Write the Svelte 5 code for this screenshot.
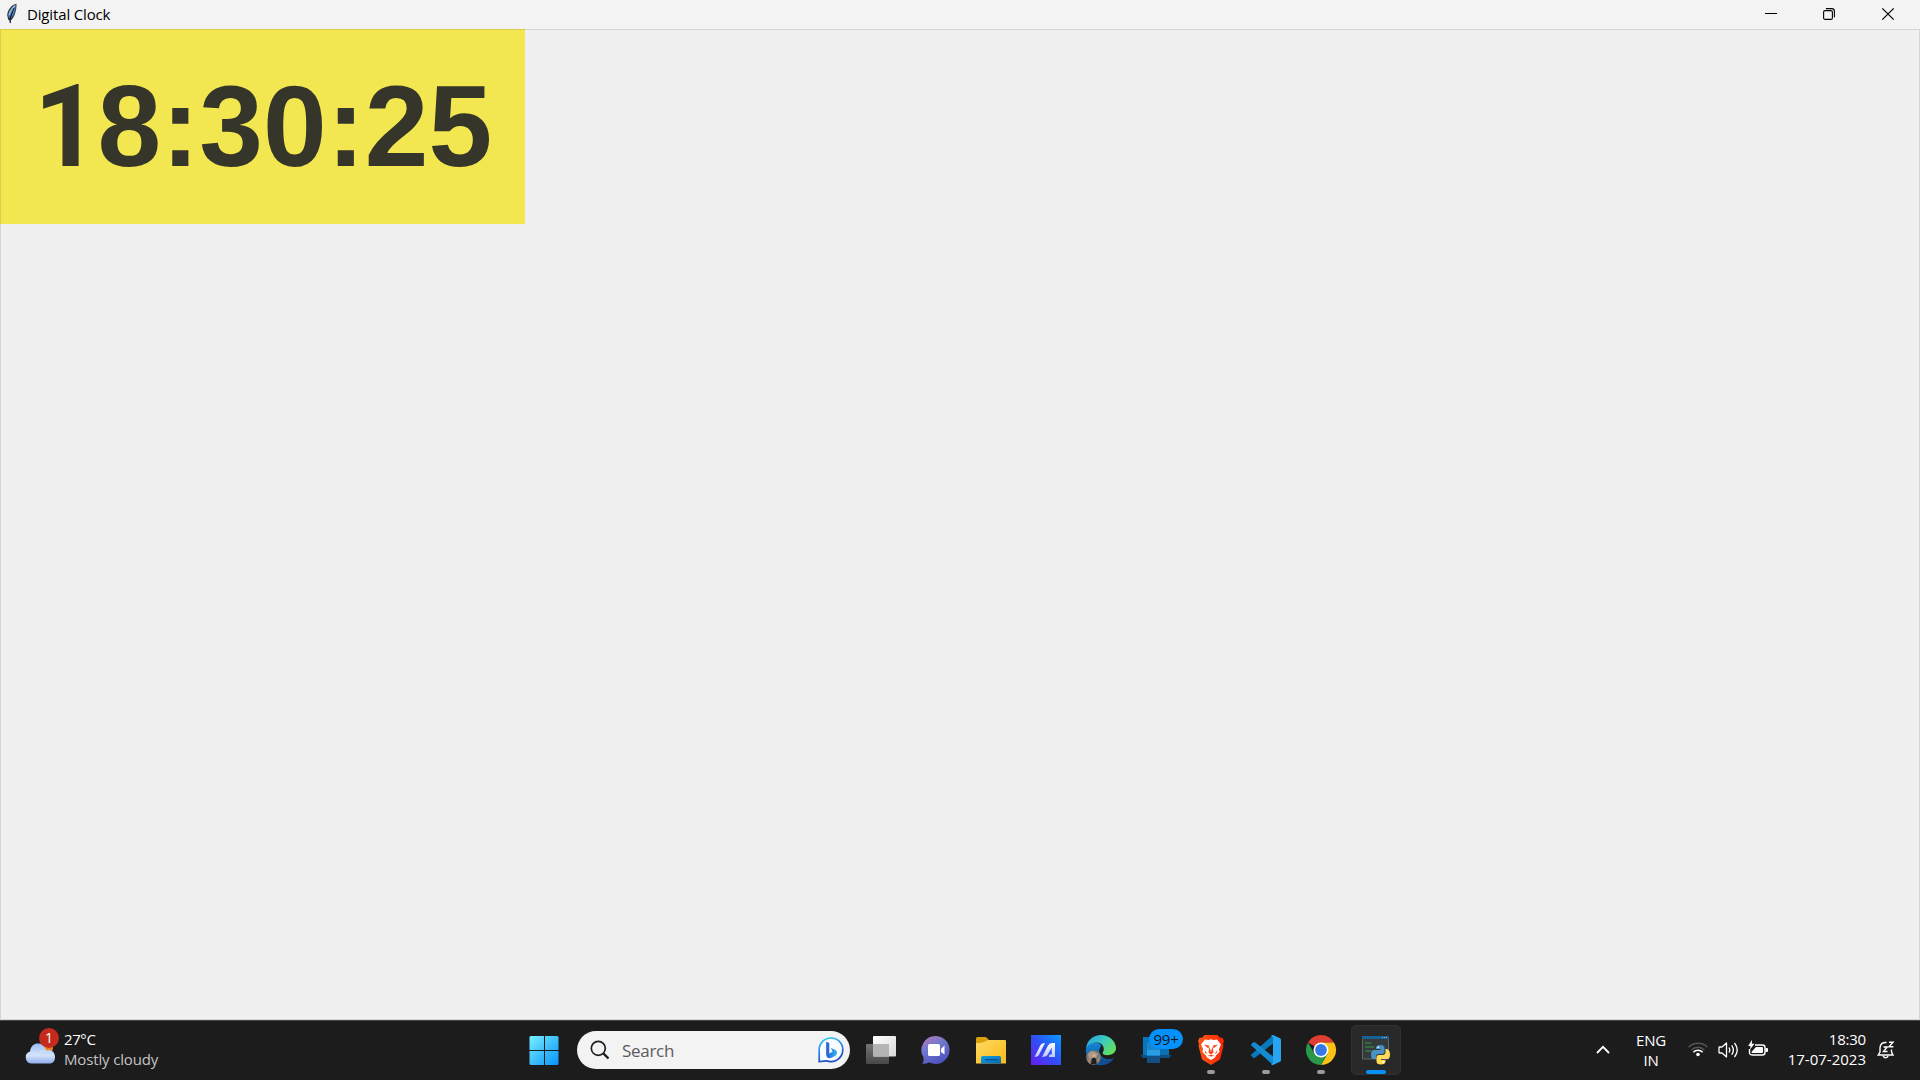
<script>
  const time = '18:30:25';
</script>

<div class="desktop">
  <header class="titlebar">
    <svg class="feather" width="12" height="22" viewBox="0 0 12 22">
      <path d="M10.5 .8C6 1.500 1.200 7 1.200 12.500L2.300 17 3.800 17.500 4 21 4.700 17.500C8.500 15 10.800 7 10.500.8Z" fill="#343b44" />
      <path d="M9.500 2C6 4 2.800 8 2.300 13L3.500 15 7 7.500 5 15.500C8 12 9.800 7 9.500 2Z" fill="#4a86cf" />
      <path d="M9 2.500C6.500 5 4 8 3 12" stroke="#a4bdd8" stroke-width="1.200" fill="none" />
      <path d="M8 5 4.200 15V20" stroke="#0d1420" stroke-width="1" fill="none" />
    </svg>
    <span class="title">Digital Clock</span>
    <div class="controls">
      <svg width="12" height="12" viewBox="0 0 12 12"><path d="M0 5.500H12" stroke="#000" /></svg>
      <svg width="12" height="12" viewBox="0 0 12 12" fill="none" stroke="#000" stroke-width="1.100">
        <rect x=".6" y="2.600" width="8.800" height="8.800" rx="1.500" />
        <path d="M2.900.6H8.800Q11.400.6 11.400 3.200V9.300" />
      </svg>
      <svg width="12" height="12" viewBox="0 0 12 12"><path d="M.3.3 11.700 11.700M11.700.3.3 11.700" stroke="#000" stroke-width="1.200" /></svg>
    </div>
  </header>

  <main>
    <div class="clock">{#each time as digit}<span class:one={digit === '1'}>{digit}</span>{/each}</div>
  </main>

  <footer class="taskbar">
    <div class="weather">
      <div class="weather-icon">
        <svg width="32" height="32" viewBox="0 0 32 32">
          <defs>
            <linearGradient id="cloud" x1="0" y1="0" x2="0" y2="1"><stop offset="0" stop-color="#9cbdf3" /><stop offset=".6" stop-color="#d3e2fa" /><stop offset="1" stop-color="#8eadea" /></linearGradient>
          </defs>
          <circle cx="23" cy="14" r="6" fill="#ef7d1a" />
          <path d="M7 29.500A6.200 6.200 0 0 1 6 17.500C7 11 11 9 15 9.500C19 10 21.500 13 22 16.500C27 14.500 31 18 31 23C31 27 29 29.500 25.500 29.500Z" fill="url(#cloud)" />
          <path d="M2 22C6 16 11 18 13.500 22C16 17.500 20 16 23 17" fill="none" stroke="#dce8fc" stroke-width="1" opacity=".7" />
        </svg>
        <span class="alert">1</span>
      </div>
      <div class="weather-text">
        <span class="temp">27°C</span>
        <span class="condition">Mostly cloudy</span>
      </div>
    </div>

    <div class="apps">
      <div class="app">
        <svg width="30" height="30" viewBox="0 0 30 30">
          <defs><linearGradient id="win" gradientUnits="userSpaceOnUse" x1="0" y1="0" x2="30" y2="30"><stop stop-color="#7bf3ff" /><stop offset=".5" stop-color="#3fc0fb" /><stop offset="1" stop-color="#0594fb" /></linearGradient></defs>
          <path d="M1.500 1H15V15H.5V2ZM16 1H28.500L29.500 2V15H16ZM.5 16H15V30H1.500L.5 29ZM16 16H29.500V29L28.500 30H16Z" fill="url(#win)" />
        </svg>
      </div>

      <div class="search">
        <svg width="20" height="20" viewBox="0 0 20 20" fill="none" stroke="#202020"><circle cx="8.300" cy="8.300" r="7" stroke-width="1.700" /><path d="M13.300 13.300 18.500 18.500" stroke-width="2.400" /></svg>
        <span>Search</span>
        <svg class="bing" width="26" height="26" viewBox="0 0 26 26">
          <defs>
            <linearGradient id="bingRing" x1="0" y1="0" x2=".3" y2="1"><stop stop-color="#23d3ee" /><stop offset=".5" stop-color="#2e8bec" /><stop offset="1" stop-color="#1b4bc0" /></linearGradient>
            <linearGradient id="bingB" x1="0" y1="0" x2="1" y2="0"><stop stop-color="#2459d7" /><stop offset="1" stop-color="#30bcec" /></linearGradient>
          </defs>
          <path d="M1.200 24.600V12.800A11.800 11.800 0 1 1 13 24.600Q10.500 24.600 8.500 23.800Z" fill="#fafcff" stroke="url(#bingRing)" stroke-width="1.700" />
          <path d="M8.200 4.700 11.300 6V16.500L14.500 14.800 13 11 17.500 13Q19.800 14.500 18.800 17.300Q17 20 11.700 21.300Q8.300 21 8.200 17.500Z" fill="url(#bingB)" />
        </svg>
      </div>

      <div class="app">
        <svg width="30" height="30" viewBox="0 0 30 30">
          <defs><linearGradient id="tv" x1="0" y1="0" x2="1" y2="1"><stop stop-color="#fff" /><stop offset="1" stop-color="#d8d8d8" /></linearGradient><linearGradient id="tb" x1="0" y1="0" x2="0" y2="1"><stop stop-color="#737373" /><stop offset="1" stop-color="#484848" /></linearGradient></defs>
          <rect x="0" y="9" width="23" height="20" rx="1" fill="url(#tb)" />
          <rect x="7" y="1" width="23" height="20.500" rx="1" fill="url(#tv)" />
          <path d="M7 9H23V21.500H8Q7 21.500 7 20.500Z" fill="#b4b4b4" />
        </svg>
      </div>

      <div class="app">
        <svg width="30" height="30" viewBox="0 0 30 30">
          <defs><linearGradient id="chat" x1="0" y1="0" x2=".5" y2="1"><stop stop-color="#bd77b6" /><stop offset=".45" stop-color="#7378ce" /><stop offset="1" stop-color="#5054be" /></linearGradient></defs>
          <path d="M15 1A14 14 0 1 1 8.500 27.600Q5 29 1.200 28.800Q3.300 26 2.500 22.300A14 14 0 0 1 15 1Z" fill="url(#chat)" />
          <rect x="7" y="9" width="12" height="12" rx="1.500" fill="#fff" /><path d="M20 14 23.500 10.500V19.500L20 17Z" fill="#fff" />
        </svg>
      </div>

      <div class="app">
        <svg width="30" height="30" viewBox="0 0 30 30">
          <defs><linearGradient id="fold" x1="0" y1="0" x2="1" y2="1"><stop stop-color="#ffda63" /><stop offset="1" stop-color="#fab916" /></linearGradient><linearGradient id="pocket" x1="0" y1="0" x2="1" y2="1"><stop stop-color="#13a0df" /><stop offset="1" stop-color="#0766b4" /></linearGradient></defs>
          <path d="M0 3.500Q0 2 1.500 2H9Q10 2 11 3L13 5V10H0Z" fill="#dda00d" />
          <path d="M0 8Q6 8 9 6.500L12 5H29Q30 5 30 6V28.500H0Z" fill="url(#fold)" />
          <path d="M5 28.500V22.500Q5 21 6.500 21H23.500Q25 21 25 22.500V28.500Z" fill="url(#pocket)" /><path d="M9 24.700H21.500" stroke="#064c87" stroke-width="1.200" />
        </svg>
      </div>

      <div class="app">
        <svg width="30" height="30" viewBox="0 0 30 30">
          <defs><linearGradient id="ma" x1="1" y1="0" x2="0" y2="1"><stop stop-color="#079cff" /><stop offset=".5" stop-color="#314ff6" /><stop offset="1" stop-color="#671cef" /></linearGradient><linearGradient id="maw" x1="0" y1="0" x2="0" y2="1"><stop stop-color="#fff" /><stop offset="1" stop-color="#bdc7fb" /></linearGradient></defs>
          <rect width="30" height="30" fill="url(#ma)" />
          <path d="M3.500 22 9 11Q10.200 8 14 8L7.800 20.300Q7 22 3.500 22ZM11 22 17 10.500Q18.200 8 21 8H24V22H17.800L18.500 19.500H20.800V12.500L16.300 20.300Q15 22 11 22Z" fill="url(#maw)" />
        </svg>
      </div>

      <div class="app">
        <svg width="30" height="30" viewBox="0 0 30 30">
          <defs>
            <linearGradient id="edgeTop" x1="0" y1="0" x2="1" y2=".6"><stop stop-color="#279bcf" /><stop offset=".5" stop-color="#38c8ca" /><stop offset="1" stop-color="#61df5e" /></linearGradient>
            <linearGradient id="edgeSide" x1="0" y1="0" x2="0" y2="1"><stop stop-color="#1685d7" /><stop offset="1" stop-color="#08589e" /></linearGradient>
          </defs>
          <path d="M.2 12A15 15 0 0 0 27.500 23.300C24 25.300 16 25 13.500 18C12 13 17 11 14 9C8 6 2 8 .2 12Z" fill="url(#edgeSide)" />
          <path d="M.2 13C1 5 7.500 0 15 0C24 0 30 7 30 13C30 18 25.500 20.200 21 20.200C17.500 20.200 15.800 18.500 17 17C19 14 17.500 7.500 10.500 7.500C5.500 7.500 1.500 10 .2 13Z" fill="url(#edgeTop)" />
          <path d="M9 17C8 24 13 30 18 29.800C22.500 29 26 26.500 27.800 23.300C21 27 12 24 9 17Z" fill="#124b91" />
          <circle cx="7.500" cy="22.500" r="7.300" fill="#80766a" />
          <path d="M2 19 5 16 9 17 12 19 10 23 3 24Z" fill="#a99b87" />
          <path d="M1 25 5 23 4 29ZM10 25 14 22 13 27Z" fill="#9b8b74" />
          <circle cx="8" cy="20.500" r="1.500" fill="#d3ae9f" /><path d="M5 29 5.800 23.500 8 22.500 10.200 24 10.500 29Z" fill="#231f20" />
        </svg>
      </div>

      <div class="app">
        <svg width="30" height="30" viewBox="0 0 30 30">
          <path d="M2 2H28V21H2Z" fill="#0e70b4" /><path d="M0 20H30V21L28 23H2L0 21Z" fill="#0c4f84" />
          <path d="M2 2H12V20H2Z" fill="#0876bd" />
          <rect x="6" y="7" width="13" height="21" fill="#1785cc" /><path d="M6 15H19V20H6Z" fill="#2b9ce1" /><path d="M6 21H19V28H6Z" fill="#134f82" />
        </svg>
        <span class="count">99+</span>
      </div>

      <div class="app">
        <svg width="30" height="30" viewBox="0 0 30 30">
          <defs><linearGradient id="brave"><stop stop-color="#fb5818" /><stop offset="1" stop-color="#fb2204" /></linearGradient></defs>
          <path d="M8.500 0H21.500L24 2.800 26.500 2.700 28 6 27 9 27.500 11 24 24.500 15 30 6 24.500 2.500 11 3 9 2 6 3.500 2.700 6 2.800Z" fill="url(#brave)" />
          <path d="M9 4.500 12.500 5 15 4.200 17.500 5 21 4.500 25 9.500 23 14 23.500 17 20 20.500 19 22.500 15 25 11 22.500 10 20.500 6.500 17 7 14 5 9.500Z" fill="#fff" />
          <path d="M8 9.500 13 10.500 12.500 13.500ZM22 9.500 17 10.500 17.500 13.500ZM13.500 11.500 15 17 16.500 11.500 17.500 17.500 15 19.500 12.500 17.500ZM8.500 15 11.500 19 9.300 18ZM21.500 15 18.500 19 20.700 18ZM11.500 20.800 15 19.800 18.500 20.800 15 21.500Z" fill="#f84216" />
        </svg>
        <i class="running"></i>
      </div>

      <div class="app">
        <svg width="30" height="30" viewBox="0 0 30 30">
          <path d="M22 0V8.500L4 22.800Q3 23.400 2 22.600L.5 21Q-.3 20 .6 19.200Z" fill="#0879bd" />
          <path d="M22 30V21.500L4 7.200Q3 6.600 2 7.400L.5 9Q-.3 10 .6 10.800Z" fill="#138bd1" />
          <path d="M21.500 0Q22 0 22.500.2L29 3.300Q30 3.800 30 4.800V25.200Q30 26.200 29 26.700L22.500 29.800Q21 30.400 20 29.300L22 28V2L20 .7Q20.500 0 21.500 0Z" fill="#28a5f1" />
        </svg>
        <i class="running"></i>
      </div>

      <div class="app">
        <svg width="30" height="30" viewBox="0 0 30 30">
          <path d="M15 15 2 7.500A15 15 0 0 1 28 7.500H15Z" fill="#df3d32" />
          <path d="M15 15V7.500H28A15 15 0 0 1 15 30L21.500 18.800Z" fill="#fbc116" />
          <path d="M15 15 21.500 18.800 15 30A15 15 0 0 1 2 7.500L8.500 18.800Z" fill="#299849" />
          <circle cx="15" cy="15" r="7.500" fill="#fff" /><circle cx="15" cy="15" r="5.900" fill="#3579e8" />
        </svg>
        <i class="running"></i>
      </div>

      <div class="app active">
        <svg width="30" height="30" viewBox="0 0 30 30">
          <rect x="1.500" y="2" width="26" height="22" fill="#353b3d" stroke="#60676a" />
          <path d="M1 1H28V4H1Z" fill="#176294" /><path d="M21 2.500H27" stroke="#8bb9d4" stroke-dasharray="1 1" />
          <path d="M4 8H10M4 12H13M4 16H10" stroke="#357f3b" stroke-width="1.300" />
          <path d="M15 14V12.500Q15 10 19 10Q23.500 10 23.500 13V17Q23.500 19 21 19H17.500Q15 19 15 21.500V24H12.500Q10 24 10 19.500Q10 15 13 15H19.500V14Z" fill="#4a91c5" />
          <path d="M24.500 14H26Q29 15 29 19.500Q29 24 26 24H20V25H24.500V26.500Q24.500 29.500 20 29.500Q15.500 29.500 15.500 26.500V22Q15.500 20 18 20H21.500Q24.500 20 24.500 17Z" fill="#ffdc57" />
          <circle cx="17.300" cy="12.300" r=".9" fill="#fff" /><circle cx="22.200" cy="27.200" r=".9" fill="#fff" />
        </svg>
        <i class="running"></i>
      </div>
    </div>

    <div class="tray">
      <svg width="14" height="9" viewBox="0 0 14 9"><path d="M1 8 7 1.800 13 8" stroke="#fff" stroke-width="1.800" fill="none" /></svg>
      <div class="lang"><span>ENG</span><span>IN</span></div>
      <div class="status">
        <svg width="20" height="16" viewBox="0 0 20 16" fill="none" stroke-width="1.400">
          <path d="M.7 6.200A13 13 0 0 1 19.300 6.200M3.500 9A9 9 0 0 1 16.500 9" stroke="#555" />
          <path d="M5.300 11.200A6.600 6.600 0 0 1 14.700 11.200" stroke="#fff" stroke-width="1.500" /><circle cx="10" cy="13.500" r="1.800" fill="#fff" />
        </svg>
        <svg width="21" height="18" viewBox="0 0 21 18" fill="none" stroke="#fff" stroke-width="1.300" stroke-linejoin="round">
          <path d="M1 6.500Q1 6 1.500 6H4L8.500 2V16L4 12H1.500Q1 12 1 11.500Z" /><path d="M11 6.500Q12.700 9 11 11.500M13.700 4.300Q17 9 13.700 13.700M16.500 2Q22 9 16.500 16" />
        </svg>
        <svg class="battery" width="20" height="18" viewBox="0 0 20 18">
          <path d="M7 5H14.500Q17 5 17 7.500V12.500Q17 15 14.500 15H4Q1.500 15 1.500 12.500V9" fill="none" stroke="#fff" stroke-width="1.400" /><path d="M8 7H14Q15 7 15 8V12Q15 13 14 13H4.500Q3.500 13 3.500 12L7 8ZM17.500 8H19Q20 8 20 9V11Q20 12 19 12H17.500Z" fill="#fff" />
          <path d="M4-.2.2 6H2.500L2 9.500 6.500 3.800H3.800Z" fill="#fff" />
        </svg>
      </div>
      <div class="date"><span class="hm">18:30</span><span class="dmy">17-07-2023</span></div>
      <svg width="18" height="18" viewBox="0 0 18 18" fill="none" stroke="#fff" stroke-width="1.400">
        <path d="M9.500 1.500Q3.300 1 3 7V11L1.200 14H16L14.500 11V8.500" /><path d="M6 14.800Q8.500 18.600 11.200 14.800" /><path d="M6.500 6H10.200L6.500 10.500H10.500" /><path d="M12 1.200H16L12 5.800H16.400" />
      </svg>
    </div>
  </footer>
</div>

<style>
  :global(body) { margin: 0; overflow: hidden; }
  .desktop { width: 1920px; height: 1080px; display: flex; flex-direction: column; font-family: "Open Sans", "Noto Sans", sans-serif; background: #f0f0f0; }
  svg { display: block; flex: none; overflow: visible; }
  span { white-space: nowrap; }

  .titlebar { height: 29px; flex: none; box-sizing: border-box; display: flex; align-items: center; background: #f3f3f3; color: #000; padding: 0 26px 2px 6px; }
  .feather { margin-top: 0; }
  .title { margin-left: 9px; font-size: 15px; line-height: 20px; letter-spacing: -.15px; margin-top: 1px; }
  .controls { margin-left: auto; display: flex; gap: 46px; margin-top: 1px; }
  .controls svg:last-child { margin-left: 1px; }

  main { flex: 1; box-sizing: border-box; border: 1px solid #d5d5d5; border-top-color: #d4d4d4; display: flex; align-items: flex-start; }
  .clock { width: 525px; height: 195px; margin: -1px 0 0 -1px; box-sizing: border-box; border-left: 1px solid #d8ce4b; border-top: 1px solid #d5cd4d; background: #f2e750; color: #363529; font: bold 114.500px/193px "Liberation Sans", Arial, sans-serif; display: flex; align-items: baseline; justify-content: center; }
  .one { width: .556em; font-family: Roboto, "Liberation Sans", sans-serif; line-height: 1; }

  .taskbar { height: 60px; flex: none; box-sizing: border-box; border-top: 1px solid #454947; background: #1c1c1c; display: grid; grid-template-columns: 517px 884px 519px; }

  .weather { display: flex; padding-left: 24px; }
  .weather-icon { position: relative; margin-top: 13px; }
  .alert { position: absolute; left: 15px; top: -6px; width: 20px; height: 20px; border-radius: 50%; background: #c42b1c; color: #fff; font-size: 14px; line-height: 20px; text-align: center; }
  .weather-text { margin: 8px 0 0 8px; display: flex; flex-direction: column; font-size: 15px; line-height: 20px; color: #fff; }
  .temp { letter-spacing: -.4px; }
  .condition { color: #c4c4c4; letter-spacing: -.15px; }

  .apps { display: flex; }
  .app { width: 55px; position: relative; display: flex; justify-content: center; padding: 14px 1px 0 0; box-sizing: border-box; }
  .search { width: 273px; height: 38px; margin: 10px 4px 0 5px; padding: 0 6px 0 13px; border-radius: 19px; background: #f3f3f3; box-sizing: border-box; display: flex; align-items: center; font-size: 17px; color: #5c5c5c; }
  .search span { margin: 1px auto 0 12px; letter-spacing: -.3px; line-height: 24px; }
  .count { position: absolute; left: 20px; top: 8px; width: 34px; height: 20px; border-radius: 10px; background: #0591fc; color: #151515; font-size: 15px; letter-spacing: -.3px; line-height: 20px; text-align: center; }
  .running { position: absolute; left: 23px; top: 49px; width: 8px; height: 4px; border-radius: 2px; background: #9a9a9a; }
  .active { width: 50px; height: 50px; margin: 4px 0 0 2px; border-radius: 5px; background: #292929; border: 1px solid #303030; padding: 9px 0 0; }
  .active .running { left: 14px; top: 44px; width: 20px; background: #0591fc; }

  .tray { display: flex; color: #fff; font-size: 15px; line-height: 20px; padding-left: 195px; }
  .tray > svg:first-child { margin-top: 24px; }
  .lang { width: 40px; margin: 9px 0 0 21px; display: flex; flex-direction: column; align-items: center; letter-spacing: -.2px; }
  .status { display: flex; gap: 10px; margin: 20px 0 0 17px; }
  .battery { margin: -1px 0 0 -1px; }
  .date { width: 98px; margin-top: 8px; display: flex; flex-direction: column; align-items: flex-end; }
  .hm { letter-spacing: -.2px; }
  .dmy { letter-spacing: 0; }
  .tray > svg:last-child { margin: 20px 0 0 11px; }
</style>
